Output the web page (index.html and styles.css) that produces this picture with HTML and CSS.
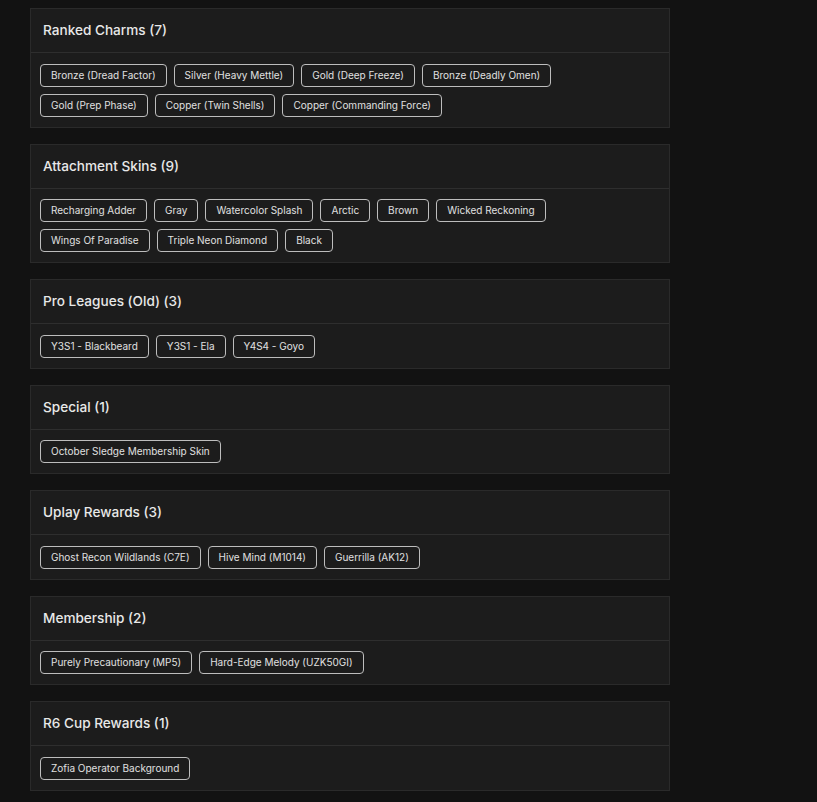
FILE: index.html
```html
<!DOCTYPE html>
<html lang="en">
<head>
    <meta charset="UTF-8">
    <meta name="viewport" content="width=device-width, initial-scale=1.0">
    <title>Items</title>
    <link rel="stylesheet" href="styles.css">
</head>
<body>

<div class="container">

    <div class="card">
        <div class="card-header">Ranked Charms (7)</div>
        <div class="card-body">
            <span class="tag">Bronze (Dread Factor)</span>
            <span class="tag">Silver (Heavy Mettle)</span>
            <span class="tag">Gold (Deep Freeze)</span>
            <span class="tag">Bronze (Deadly Omen)</span>
            <span class="tag">Gold (Prep Phase)</span>
            <span class="tag">Copper (Twin Shells)</span>
            <span class="tag">Copper (Commanding Force)</span>
        </div>
    </div>

    <div class="card">
        <div class="card-header">Attachment Skins (9)</div>
        <div class="card-body">
            <span class="tag">Recharging Adder</span>
            <span class="tag">Gray</span>
            <span class="tag">Watercolor Splash</span>
            <span class="tag">Arctic</span>
            <span class="tag">Brown</span>
            <span class="tag">Wicked Reckoning</span>
            <span class="tag">Wings Of Paradise</span>
            <span class="tag">Triple Neon Diamond</span>
            <span class="tag">Black</span>
        </div>
    </div>

    <div class="card">
        <div class="card-header">Pro Leagues (Old) (3)</div>
        <div class="card-body">
            <span class="tag">Y3S1 - Blackbeard</span>
            <span class="tag">Y3S1 - Ela</span>
            <span class="tag">Y4S4 - Goyo</span>
        </div>
    </div>

    <div class="card">
        <div class="card-header">Special (1)</div>
        <div class="card-body">
            <span class="tag">October Sledge Membership Skin</span>
        </div>
    </div>

    <div class="card">
        <div class="card-header">Uplay Rewards (3)</div>
        <div class="card-body">
            <span class="tag">Ghost Recon Wildlands (C7E)</span>
            <span class="tag">Hive Mind (M1014)</span>
            <span class="tag">Guerrilla (AK12)</span>
        </div>
    </div>

    <div class="card">
        <div class="card-header">Membership (2)</div>
        <div class="card-body">
            <span class="tag">Purely Precautionary (MP5)</span>
            <span class="tag">Hard-Edge Melody (UZK50GI)</span>
        </div>
    </div>

    <div class="card">
        <div class="card-header">R6 Cup Rewards (1)</div>
        <div class="card-body">
            <span class="tag">Zofia Operator Background</span>
        </div>
    </div>

</div>

</body>
</html>
```

FILE: styles.css
```css
body {
    margin: 0;
    background-color: #121212;
    color: #e8e8e8;
    font-family: Inter, "Open Sans", sans-serif;
}
.container { width: 640px; padding: 8px 0 0 30px; }
.card {
    background-color: #1c1c1c;
    border: 1px solid #2a2a2a;
    margin-bottom: 16px;
}
.card-header {
    height: 43px;
    line-height: 43px;
    padding: 0 12px;
    font-size: 13.6px;
    font-weight: 500;
    border-bottom: 1px solid #2e2e2e;
}
.card-body {
    display: flex;
    flex-wrap: wrap;
    gap: 7px 7px;
    padding: 10.5px 9px 10px;
}
.tag {
    height: 21px;
    line-height: 21px;
    padding: 0 10px;
    font-size: 10px;
    color: #e0e0e0;
    border: 1px solid #bdbdbd;
    border-radius: 4px;
    white-space: nowrap;
}
```
